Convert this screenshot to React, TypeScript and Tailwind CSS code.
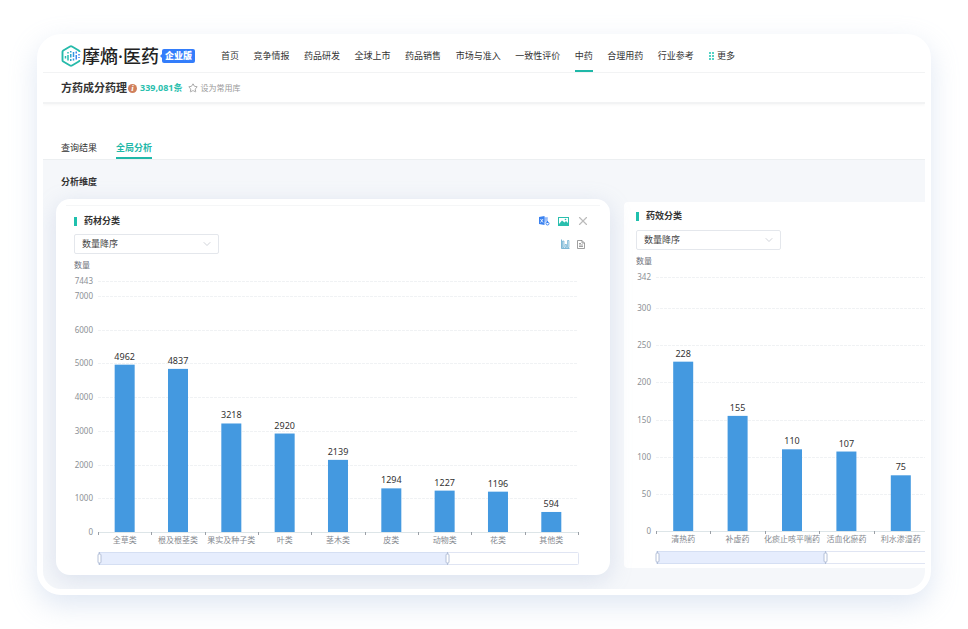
import { ChevronDown, Star, X } from "lucide-react";

interface BarItem {
  name: string;
  value: number;
}

interface ChartConfig {
  title: string;
  data: BarItem[];
  ticks: number[];
  plotLeft: number;
  plotHeight: number;
  axisWidth: number;
  band: number;
  zoomEnd: number;
}

const NAV = [
  "首页",
  "竞争情报",
  "药品研发",
  "全球上市",
  "药品销售",
  "市场与准入",
  "一致性评价",
  "中药",
  "合理用药",
  "行业参考",
];

const herbChart: ChartConfig = {
  title: "药材分类",
  data: [
    { name: "全草类", value: 4962 },
    { name: "根及根茎类", value: 4837 },
    { name: "果实及种子类", value: 3218 },
    { name: "叶类", value: 2920 },
    { name: "茎木类", value: 2139 },
    { name: "皮类", value: 1294 },
    { name: "动物类", value: 1227 },
    { name: "花类", value: 1196 },
    { name: "其他类", value: 594 },
  ],
  ticks: [7443, 7000, 6000, 5000, 4000, 3000, 2000, 1000, 0],
  plotLeft: 24,
  plotHeight: 251,
  axisWidth: 480,
  band: 53.33,
  zoomEnd: 349,
};

const effectChart: ChartConfig = {
  title: "药效分类",
  data: [
    { name: "清热药", value: 228 },
    { name: "补虚药", value: 155 },
    { name: "化痰止咳平喘药", value: 110 },
    { name: "活血化瘀药", value: 107 },
    { name: "利水渗湿药", value: 75 },
  ],
  ticks: [342, 300, 250, 200, 150, 100, 50, 0],
  plotLeft: 20,
  plotHeight: 254,
  axisWidth: 480,
  band: 54.4,
  zoomEnd: 169,
};

const BarChart = ({ chart }: { chart: ChartConfig }) => {
  const { data, ticks, plotLeft, plotHeight, axisWidth, band, zoomEnd } = chart;
  const top = 22;
  const base = top + plotHeight;
  const max = ticks[0];
  const right = plotLeft + axisWidth;
  const y = (value: number) => base - (value / max) * plotHeight;
  const tickCount = Math.floor(axisWidth / band + 0.1) + 1;

  return (
    <svg
      width={right + 2}
      height={base + 35}
      className="block shrink-0"
      role="img"
      aria-label={chart.title}
    >
      <text x={0} y={9} className="fill-[#6e7079] text-[8px]">
        数量
      </text>
      {ticks.map((tick) => (
        <g key={tick}>
          {tick > 0 && (
            <line
              x1={plotLeft}
              x2={right}
              y1={Math.round(y(tick)) + 0.5}
              y2={Math.round(y(tick)) + 0.5}
              stroke="#f0f2f4"
              strokeDasharray="3 1"
            />
          )}
          <text
            x={plotLeft - 5}
            y={y(tick) + 3}
            textAnchor="end"
            className="fill-[#8c9095] text-[8px]"
          >
            {tick}
          </text>
        </g>
      ))}

      {data.map((item, i) => {
        const center = plotLeft + band * (i + 0.5);
        return (
          <g key={item.name}>
            <rect
              x={center - 10}
              y={y(item.value)}
              width={20}
              height={base - y(item.value)}
              fill="#4499e0"
            />
            <text
              x={center}
              y={y(item.value) - 5}
              textAnchor="middle"
              className="fill-[#333333] text-[9px]"
            >
              {item.value}
            </text>
            <text
              x={center}
              y={base + 11}
              textAnchor="middle"
              className="fill-[#85898f] text-[8px]"
            >
              {item.name}
            </text>
          </g>
        );
      })}

      <line x1={plotLeft} x2={right} y1={base + 0.5} y2={base + 0.5} stroke="#dde5e8" />
      {Array.from({ length: tickCount }, (_, i) => {
        const x = Math.round(plotLeft + band * i) + 0.5;
        return <line key={i} x1={x} x2={x} y1={base} y2={base + 3} stroke="#9a9fa6" />;
      })}

      {/* data zoom */}
      <rect
        x={plotLeft + 0.5}
        y={base + 20.5}
        width={axisWidth}
        height={12}
        rx={1}
        fill="#ffffff"
        stroke="#e0e5f3"
      />
      <rect
        x={plotLeft + 1}
        y={base + 20.5}
        width={zoomEnd}
        height={12}
        fill="#e6edfd"
        stroke="#d5dff3"
      />
      {[plotLeft + 1.5, plotLeft + zoomEnd + 0.5].map((x) => (
        <g key={x} stroke="#b4c0d8">
          <line x1={x} x2={x} y1={base + 20} y2={base + 33} />
          <rect x={x - 1.5} y={base + 22} width={3} height={9} rx={1} fill="#ffffff" />
        </g>
      ))}
    </svg>
  );
};

const SortSelect = ({ label }: { label: string }) => (
  <div className="relative w-[145px]">
    <select
      aria-label={label}
      className="block h-5 w-full appearance-none rounded-xs border border-[#e4e7ec] bg-white pl-[7px] text-[9px] leading-4 text-[#444444]"
    >
      <option>数量降序</option>
      <option>数量升序</option>
    </select>
    <ChevronDown
      className="pointer-events-none absolute top-1 right-1.5 size-3 text-[#c0c4cc]"
      strokeWidth={1.5}
    />
  </div>
);

const PanelTitle = ({ children }: { children: string }) => (
  <h3 className="flex h-[10px] items-center gap-[7px] text-[9px] font-bold text-[#333333]">
    <span className="h-[9px] w-[3px] bg-[#1fc0ad]" />
    {children}
  </h3>
);

const Logo = () => (
  <svg viewBox="0 0 40 44" className="h-[22px] w-5" fill="none">
    <path
      d="M37 14V13.500Q37 12 35.500 11L22 3Q20 2 18 3L4.500 11Q3 12 3 13.500V30.500Q3 32 4.500 33L18 41Q20 42 22 41L35.500 33Q37 32 37 30.500V30"
      stroke="#26baaa"
      strokeWidth="3.800"
    />
    <g strokeWidth="3">
      <path d="M9 22V27M14 14V17M14 20V31" stroke="#27bdb0" />
      <path d="M19.500 12V15M19.500 18V25M19.500 28V32" stroke="#2fa5cc" />
      <path d="M25 14V24M25 27V31" stroke="#3197e0" />
      <path d="M30.500 13V17M30.500 20V29M36 18V21M36 24V26" stroke="#3a86ee" />
    </g>
  </svg>
);

const ExcelIcon = () => (
  <svg viewBox="0 0 22 20" className="h-[10px] w-[11px]">
    <path d="M10 2h8v11h-8z" fill="#b9d2fb" />
    <path d="M11 5h6M11 8h6M14 2v9" stroke="#7fabf6" />
    <path d="M0 2 11 0v18L0 16z" fill="#3b82f0" />
    <path d="m3 6 5 7M8 6l-5 7" stroke="#ffffff" strokeWidth="1.600" />
    <circle cx="17" cy="15" r="3" fill="#ffffff" stroke="#3b82f0" strokeWidth="2" />
    <path d="M17 10v4" stroke="#3b82f0" strokeWidth="2" />
  </svg>
);

const PictureIcon = () => (
  <svg viewBox="0 0 22 18" className="h-[9px] w-[11px]">
    <rect x="1" y="1" width="20" height="16" fill="#ffffff" stroke="#2abfae" strokeWidth="2" />
    <path d="M2 14 8 7l5 4 3-3 5 5v4H2z" fill="#2abfae" />
    <circle cx="15" cy="5" r="1.600" fill="#2abfae" />
  </svg>
);

const BarsIcon = () => (
  <svg viewBox="0 0 18 20" className="h-[10px] w-[9px]" fill="none">
    <path d="M1 1v18h16" stroke="#5aa5ca" strokeWidth="1.600" />
    <path
      d="M3 4h3v13H3zM8 11h3v6H8zM13 3h3v14h-3z"
      fill="#d6ebf5"
      stroke="#5aa5ca"
      strokeWidth="1.200"
    />
  </svg>
);

const DocIcon = () => (
  <svg viewBox="0 0 16 18" className="h-[9px] w-2" fill="none" stroke="#888888" strokeWidth="1.600">
    <path d="M1 1h9l5 5v11H1zM10 1v5h5" />
    <path d="M4 7h4M4 10h8M4 13h8" />
  </svg>
);

export default function App() {
  return (
    <div className="bg-white px-[37px] pt-[34px] pb-[34px] font-['Noto_Sans','Noto_Sans_CJK_SC',sans-serif] text-[9px] leading-[12px] text-[#333333]">
      <div className="overflow-hidden rounded-[24px] border-6 border-white bg-white shadow-[0_10px_28px_rgba(150,175,215,0.300)]">
        <header className="flex h-[33px] items-center border-b border-[#f3f4f5] pl-[18px]">
          <a href="#" className="flex shrink-0 items-center whitespace-nowrap text-[#222222]">
            <Logo />
            <span className="ml-px text-[18px] leading-5 font-medium">摩熵·医药</span>
            <span className="ml-px flex items-center">
              <svg viewBox="0 0 3 6" className="-mr-px h-[6px] w-[3px]" fill="#337dfb">
                <path d="M0 3 3 0v6z" />
              </svg>
              <span className="rounded-xs bg-[#337dfb] px-[3px] text-[9px] leading-[14px] font-black text-white">
                企业版
              </span>
            </span>
          </a>
          <nav className="ml-[26px] flex h-full items-center">
            <ul className="flex h-full w-[473px] justify-between whitespace-nowrap">
              {NAV.map((item) => (
                <li
                  key={item}
                  className={
                    item === "中药"
                      ? "flex items-center border-y-2 border-t-transparent border-b-[#1fb8a8]"
                      : "flex items-center"
                  }
                >
                  <a href="#">{item}</a>
                </li>
              ))}
            </ul>
            <button className="ml-[15px] flex items-center gap-[3px] whitespace-nowrap">
              <svg viewBox="0 0 5 8" className="h-2 w-[5px]" fill="#55d3c5">
                <path d="M0 0h2v2H0zM3 0h2v2H3zM0 3h2v2H0zM3 3h2v2H3zM0 6h2v2H0zM3 6h2v2H3z" />
              </svg>
              更多
            </button>
          </nav>
        </header>

        <div className="flex h-[31px] items-center border-b-2 border-[#f2f3f4] pt-px pl-[18px] whitespace-nowrap shadow-[0_1px_3px_rgba(0,0,0,0.040)]">
          <h1 className="text-[11px] font-bold">方药成分药理</h1>
          <span className="ml-px flex size-[9px] items-center justify-center rounded-full bg-[#d0805c] font-['Liberation_Serif',serif] text-[9px] font-bold text-white italic">
            i
          </span>
          <span className="ml-[3px] font-bold text-[#2bbfae]">339,081条</span>
          <button className="ml-[6px] flex items-center gap-[2px] text-[8px] text-[#999999]">
            <Star className="size-[10px]" strokeWidth={2} />
            设为常用库
          </button>
        </div>

        <div className="flex gap-[19px] border-b border-[#eceff1] pt-[38px] pl-[18px]">
          <button className="border-b-2 border-transparent pb-[3px]">查询结果</button>
          <button className="border-b-2 border-[#1fb8a8] pb-[3px] font-bold text-[#1fb8a8]">
            全局分析
          </button>
        </div>

        <main className="bg-[#f5f7fa] pt-4 pb-[14px]">
          <h2 className="pl-[18px] font-bold">分析维度</h2>
          <div className="mt-[11px] flex items-start gap-[14px] pl-[13px]">
            <section className="relative z-10 w-[554px] shrink-0 rounded-[14px] bg-white px-[18px] pt-[6px] pb-2 shadow-[0_5px_22px_rgba(150,170,210,0.280)]">
              <div className="-mx-2 border-t border-[#f5f6f7]" />
              <div className="mt-2 flex items-center justify-between pr-[2px]">
                <PanelTitle>药材分类</PanelTitle>
                <div className="flex items-center gap-2">
                  <button aria-label="导出Excel">
                    <ExcelIcon />
                  </button>
                  <button aria-label="导出图片">
                    <PictureIcon />
                  </button>
                  <button aria-label="关闭" className="-ml-px">
                    <X className="size-[14px] text-[#bbbbbb]" strokeWidth={2} />
                  </button>
                </div>
              </div>
              <div className="mt-[6px] flex items-center justify-between pr-[7px]">
                <SortSelect label="药材分类排序" />
                <div className="flex items-center gap-[7px]">
                  <button aria-label="柱状图">
                    <BarsIcon />
                  </button>
                  <button aria-label="数据视图">
                    <DocIcon />
                  </button>
                </div>
              </div>
              <div className="mt-[5px]">
                <BarChart chart={herbChart} />
              </div>
            </section>

            <section className="mt-[3px] min-w-0 flex-1 overflow-hidden rounded-l-sm bg-white pt-[9px] pb-[2px] pl-3">
              <PanelTitle>药效分类</PanelTitle>
              <div className="mt-[9px]">
                <SortSelect label="药效分类排序" />
              </div>
              <div className="mt-[5px]">
                <BarChart chart={effectChart} />
              </div>
            </section>
          </div>
        </main>
      </div>
    </div>
  );
}
